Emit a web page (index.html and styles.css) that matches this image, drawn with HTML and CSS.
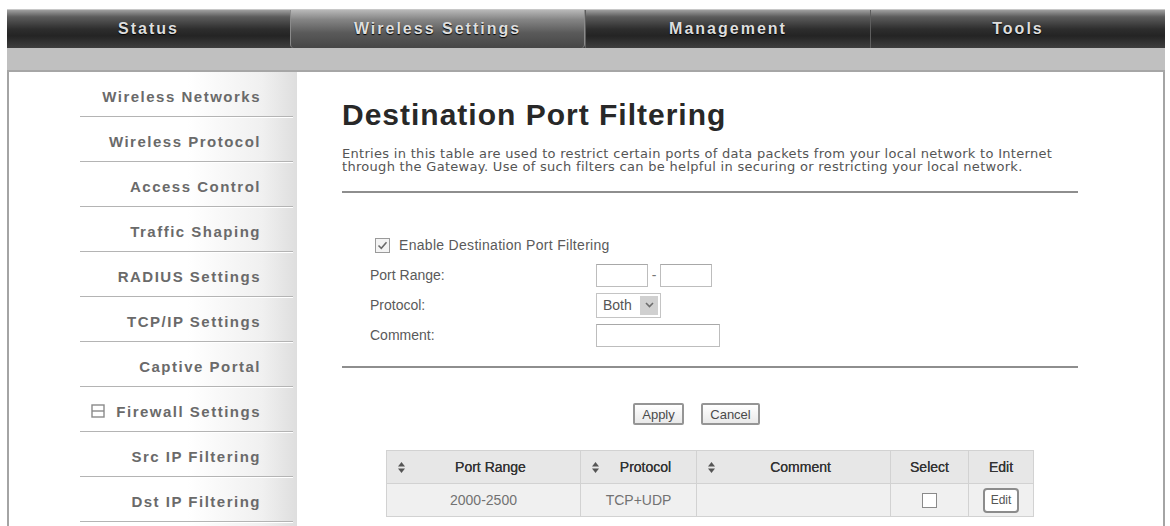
FILE: index.html
```html
<!DOCTYPE html>
<html lang="en">
<head>
    <meta charset="UTF-8">
    <title>Destination Port Filtering</title>
    <link rel="stylesheet" href="styles.css">
</head>
<body>
    <div class="page">
        <div class="topnav">
            <a href="#" class="tab">Status</a>
            <a href="#" class="tab active">Wireless Settings</a>
            <a href="#" class="tab">Management</a>
            <a href="#" class="tab">Tools</a>
        </div>
        <div class="subbar"></div>

        <div class="frame">
            <div class="sidebar">
                <a href="#" class="side-item">Wireless Networks</a>
                <a href="#" class="side-item">Wireless Protocol</a>
                <a href="#" class="side-item">Access Control</a>
                <a href="#" class="side-item">Traffic Shaping</a>
                <a href="#" class="side-item">RADIUS Settings</a>
                <a href="#" class="side-item">TCP/IP Settings</a>
                <a href="#" class="side-item">Captive Portal</a>
                <a href="#" class="side-item">
                    <svg class="fold-icon" width="14" height="14" viewBox="0 0 14 14"><rect x="1" y="1" width="12" height="12" fill="none" stroke="#8a8a8a" stroke-width="1.4"/><line x1="1" y1="7" x2="13" y2="7" stroke="#8a8a8a" stroke-width="1.4"/></svg>
                    Firewall Settings
                </a>
                <a href="#" class="side-item">Src IP Filtering</a>
                <a href="#" class="side-item">Dst IP Filtering</a>
            </div>

            <div class="main">
                <h1>Destination Port Filtering</h1>
                <p class="intro">Entries in this table are used to restrict certain ports of data packets from your local network to Internet<br>through the Gateway. Use of such filters can be helpful in securing or restricting your local network.</p>
                <div class="rule"></div>

                <div class="form">
                    <div class="row check-row">
                        <span class="check on">
                            <svg width="13" height="13" viewBox="0 0 13 13"><path d="M2.5 6.5 L5.3 9.3 L10.5 3.2" fill="none" stroke="#6a6a6a" stroke-width="1.5"/></svg>
                        </span>
                        <span>Enable Destination Port Filtering</span>
                    </div>
                    <div class="row">
                        <label class="label">Port Range:</label>
                        <input type="text" class="field short">
                        <span class="dash">-</span>
                        <input type="text" class="field short">
                    </div>
                    <div class="row">
                        <label class="label">Protocol:</label>
                        <div class="select">
                            <span class="select-value">Both</span>
                            <span class="select-arrow">
                                <svg width="9" height="6" viewBox="0 0 9 6"><path d="M1 1 L4.5 4.5 L8 1" fill="none" stroke="#6d6d6d" stroke-width="1.6"/></svg>
                            </span>
                        </div>
                    </div>
                    <div class="row">
                        <label class="label">Comment:</label>
                        <input type="text" class="field long">
                    </div>
                </div>
                <div class="rule rule-low"></div>

                <div class="actions">
                    <button class="btn btn-apply">Apply</button>
                    <button class="btn btn-cancel">Cancel</button>
                </div>

                <table class="list">
                    <thead>
                        <tr>
                            <th class="sortable"><span class="sort"><svg width="7" height="11" viewBox="0 0 7 11"><polygon points="0,4.5 3.5,0 7,4.5" fill="#555"/><polygon points="0,6.5 3.5,11 7,6.5" fill="#555"/></svg></span>Port Range</th>
                            <th class="sortable"><span class="sort"><svg width="7" height="11" viewBox="0 0 7 11"><polygon points="0,4.5 3.5,0 7,4.5" fill="#555"/><polygon points="0,6.5 3.5,11 7,6.5" fill="#555"/></svg></span>Protocol</th>
                            <th class="sortable"><span class="sort"><svg width="7" height="11" viewBox="0 0 7 11"><polygon points="0,4.5 3.5,0 7,4.5" fill="#555"/><polygon points="0,6.5 3.5,11 7,6.5" fill="#555"/></svg></span>Comment</th>
                            <th>Select</th>
                            <th>Edit</th>
                        </tr>
                    </thead>
                    <tbody>
                        <tr>
                            <td>2000-2500</td>
                            <td>TCP+UDP</td>
                            <td></td>
                            <td><span class="check small"></span></td>
                            <td><button class="btn-edit">Edit</button></td>
                        </tr>
                    </tbody>
                </table>
            </div>
        </div>
    </div>
</body>
</html>
```

FILE: styles.css
```css
* {
    margin: 0;
    padding: 0;
    box-sizing: border-box;
}

body {
    background: #fff;
    font-family: "Liberation Sans", Arial, sans-serif;
    color: #555;
}

.page {
    margin: 9px 0 0 7px;
    width: 1158px;
}

/* top navigation */
.topnav {
    display: grid;
    grid-template-columns: 283px 295px 285px 1fr;
    height: 39px;
    background: linear-gradient(#a0a0a0 0%, #5c5c5c 18%, #2e2e2e 50%, #242424 68%, #3e3e3e 100%);
    border-top: 1px solid #c8c8c8;
}

.tab {
    display: flex;
    align-items: center;
    justify-content: center;
    color: #dedede;
    font-size: 16px;
    font-weight: bold;
    letter-spacing: 2px;
    text-decoration: none;
    text-shadow: 0 1px 1px #000;
    border-left: 1px solid #5e5e5e;
}

.tab:first-child {
    border-left: none;
}

.tab.active {
    background: linear-gradient(#b8b8b8 0%, #858585 25%, #5a5a5a 60%, #464646 100%);
    border-radius: 0 0 4px 4px;
    border-left: 1px solid #8a8a8a;
    border-right: 1px solid #8a8a8a;
}

.subbar {
    height: 24px;
    background: #c0c0c0;
    border-bottom: 2px solid #a6a6a6;
}

/* body frame */
.frame {
    display: flex;
    height: 470px;
    border-left: 2px solid #a4a4a4;
    border-right: 2px solid #a4a4a4;
}

.sidebar {
    width: 288px;
    flex-shrink: 0;
    background: linear-gradient(to right, #fff 0%, #fff 62%, #f0f0f0 88%, #dedede 100%);
}

.side-item {
    display: flex;
    align-items: center;
    justify-content: flex-end;
    height: 45px;
    margin: 0 4px 0 71px;
    padding: 4px 32px 0 0;
    border-bottom: 1px solid #b4b4b4;
    box-shadow: 0 1px 0 #fff;
    color: #6a6a6a;
    font-size: 15px;
    font-weight: bold;
    letter-spacing: 1.5px;
    text-decoration: none;
}

.fold-icon {
    margin-right: 11px;
}

.main {
    flex: 1;
    padding-left: 45px;
}

h1 {
    margin-top: 25px;
    font-size: 30px;
    line-height: 36px;
    letter-spacing: 1px;
    color: #282828;
}

.intro {
    margin-top: 14px;
    font-family: "DejaVu Sans", Verdana, sans-serif;
    font-size: 13px;
    line-height: 13px;
    letter-spacing: 0.3px;
    color: #555;
}

.rule {
    width: 736px;
    height: 2px;
    margin-top: 18px;
    background: #8e8e8e;
}

.rule-low {
    margin-top: 16px;
}

/* form */
.form {
    margin-top: 37px;
    padding-left: 28px;
    font-size: 14px;
    color: #5a5a5a;
}

.row {
    display: flex;
    align-items: center;
    height: 30px;
}

.check-row {
    margin-left: 5px;
    gap: 9px;
    letter-spacing: 0.3px;
}

.check {
    display: inline-flex;
    align-items: center;
    justify-content: center;
    width: 15px;
    height: 15px;
    border: 1px solid #9a9a9a;
    background: #f4f4f4;
}

.label {
    width: 226px;
}

.field {
    height: 23px;
    border: 1px solid #bdbdbd;
    border-top-color: #a8a8a8;
    background: #fff;
    font-family: inherit;
}

.short {
    width: 52px;
}

.long {
    width: 124px;
}

.dash {
    width: 12px;
    text-align: center;
    color: #777;
}

.select {
    display: flex;
    align-items: center;
    width: 65px;
    height: 25px;
    padding: 2px;
    border: 1px solid #c4c4c4;
    background: #fff;
}

.select-value {
    flex: 1;
    padding-left: 4px;
    color: #555;
}

.select-arrow {
    display: flex;
    align-items: center;
    justify-content: center;
    width: 18px;
    height: 19px;
    background: #d0d0d0;
}

/* buttons */
.actions {
    display: flex;
    justify-content: center;
    gap: 17px;
    margin-top: 35px;
    padding-right: 27px;
    width: 736px;
}

.btn {
    height: 22px;
    border: 2px solid #959595;
    border-radius: 2px;
    background: linear-gradient(#fff, #e9e9e9);
    font-family: inherit;
    font-size: 13px;
    color: #4a4a4a;
}

.btn-apply {
    width: 51px;
}

.btn-cancel {
    width: 59px;
}

/* table */
.list {
    width: 647px;
    margin: 25px 0 0 44px;
    border-collapse: collapse;
    table-layout: fixed;
    font-size: 14px;
    border: 1px solid #d0d0d0;
}

.list th,
.list td {
    height: 33px;
    border: 1px solid #d2d2d2;
    text-align: center;
    vertical-align: middle;
}

.list th {
    background: #e7e7e7;
    font-weight: normal;
    color: #333;
    text-shadow: 0 0 0.4px #333;
    position: relative;
}

.list td {
    background: #f0f0f0;
    color: #727272;
}

.list th:nth-child(1) { width: 194px; }
.list th:nth-child(2) { width: 116px; }
.list th:nth-child(3) { width: 194px; }
.list th:nth-child(4) { width: 78px; }
.list th:nth-child(5) { width: 65px; }

.sortable {
    padding-left: 14px;
}

.sort {
    position: absolute;
    left: 11px;
    top: 11px;
    line-height: 0;
}

.check.small {
    background: #fff;
    border-color: #8a8a8a;
    vertical-align: middle;
}

.btn-edit {
    width: 36px;
    height: 25px;
    border: 2px solid #8c8c8c;
    border-radius: 4px;
    background: #fff;
    font-family: inherit;
    font-size: 12px;
    color: #555;
    vertical-align: middle;
}
```
